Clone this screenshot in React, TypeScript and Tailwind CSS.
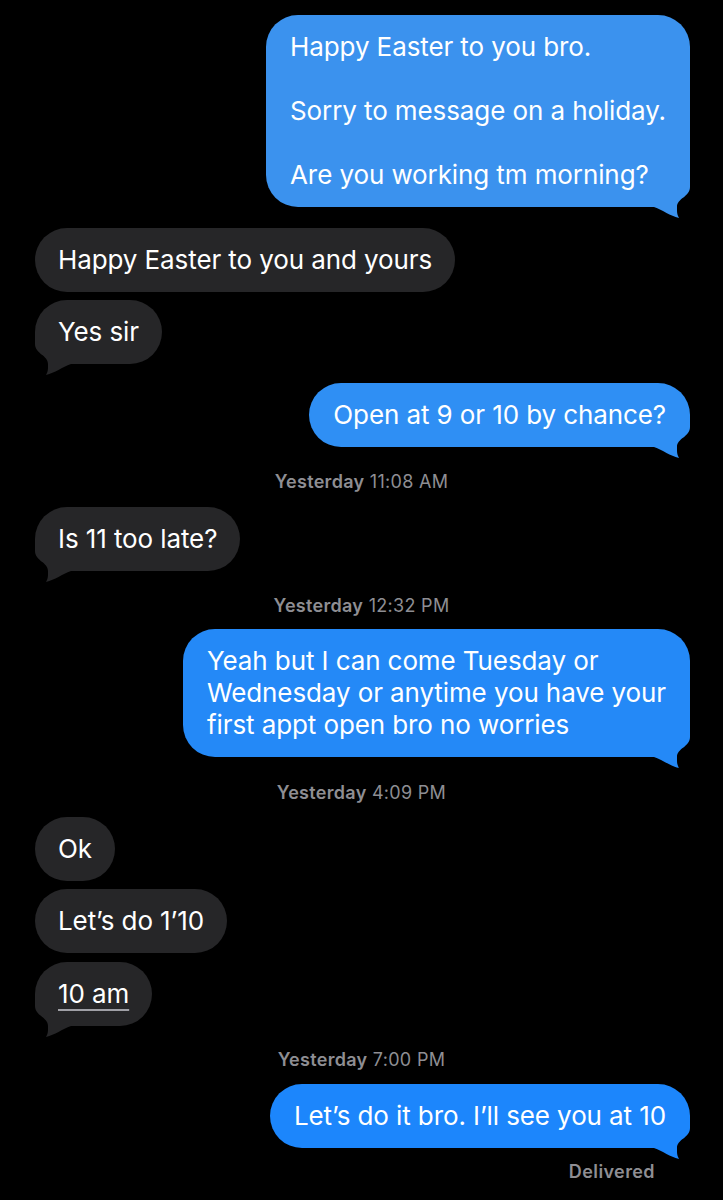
import React from "react";

const FONT = { fontFamily: '"Inter", "Liberation Sans", sans-serif' };

function TailRight({ color }: { color: string }) {
  return (
    <svg
      className="absolute right-0 bottom-[-12px] overflow-visible"
      width="36"
      height="44"
      viewBox="-36 -32 36 44"
    >
      <path
        d="M -36 -32 L 0 -32 L 0 -20 C 0 -10 -13 -9 -13 0 L -13 4 C -13 7 -12 9 -11 11 C -20 9 -27 3 -36 0 Z"
        fill={color}
      />
    </svg>
  );
}

function TailLeft({ color }: { color: string }) {
  return (
    <svg
      className="absolute left-0 bottom-[-12px] overflow-visible"
      width="36"
      height="44"
      viewBox="0 -32 36 44"
    >
      <path
        d="M 36 -32 L 0 -32 L 0 -20 C 0 -10 13 -9 13 0 L 13 4 C 13 7 12 9 11 11 C 20 9 27 3 36 0 Z"
        fill={color}
      />
    </svg>
  );
}

const GRAY = "#262628";

function Sent({
  lines,
  color,
  tail,
  className,
}: {
  lines: string[];
  color: string;
  tail?: boolean;
  className?: string;
}) {
  return (
    <div className={"flex justify-end pr-[33px] " + (className ?? "")}>
      <div
        className="relative rounded-[32px] px-[24px] py-[16px] text-white text-[26px] leading-[32px] whitespace-nowrap tracking-[-0.1px]"
        style={{ backgroundColor: color }}
      >
        {lines.map((l, i) => (
          <div key={i} className="relative z-10 h-[32px]">
            {l}
          </div>
        ))}
        {tail && <TailRight color={color} />}
      </div>
    </div>
  );
}

function Received({
  children,
  tail,
  className,
}: {
  children: React.ReactNode;
  tail?: boolean;
  className?: string;
}) {
  return (
    <div className={"flex justify-start pl-[35px] " + (className ?? "")}>
      <div className="relative rounded-[32px] bg-[#262628] px-[23px] py-[16px] text-white text-[26px] leading-[32px] whitespace-nowrap tracking-[-0.1px]">
        <div className="relative z-10 h-[32px]">{children}</div>
        {tail && <TailLeft color={GRAY} />}
      </div>
    </div>
  );
}

function Stamp({ time, className }: { time: string; className?: string }) {
  return (
    <div
      className={
        "text-center text-[18px] leading-[22px] tracking-[0.3px] text-[#8e8e93] " +
        (className ?? "")
      }
    >
      <span className="font-semibold">Yesterday</span> {time}
    </div>
  );
}

export default function App() {
  return (
    <div className="w-[723px] min-h-[1200px] bg-black overflow-hidden" style={FONT}>
      <div className="pt-[15px]">
        <Sent
          color="#3b92ee"
          tail
          lines={[
            "Happy Easter to you bro.",
            "",
            "Sorry to message on a holiday.",
            "",
            "Are you working tm morning?",
          ]}
        />
        <Received className="mt-[21px]">Happy Easter to you and yours</Received>
        <Received className="mt-[8px]" tail>
          Yes sir
        </Received>
        <Sent
          className="mt-[19px]"
          color="#2f8ff4"
          tail
          lines={["Open at 9 or 10 by chance?"]}
        />
        <Stamp time="11:08 AM" className="mt-[24px]" />
        <Received className="mt-[14px]" tail>
          Is 11 too late?
        </Received>
        <Stamp time="12:32 PM" className="mt-[24px]" />
        <Sent
          className="mt-[12px]"
          color="#2489f7"
          tail
          lines={[
            "Yeah but I can come Tuesday or",
            "Wednesday or anytime you have your",
            "first appt open bro no worries",
          ]}
        />
        <Stamp time="4:09 PM" className="mt-[25px]" />
        <Received className="mt-[13px]">Ok</Received>
        <Received className="mt-[8px]">Let’s do 1’10</Received>
        <Received className="mt-[9px]" tail>
          <span className="underline decoration-[#a0a0a6] decoration-2 underline-offset-[6px]">
            10 am
          </span>
        </Received>
        <Stamp time="7:00 PM" className="mt-[23px]" />
        <Sent
          className="mt-[13px]"
          color="#1c86fc"
          tail
          lines={["Let’s do it bro. I’ll see you at 10"]}
        />
        <div className="mt-[13px] flex justify-end pr-[68px] text-[18px] leading-[22px] tracking-[0.4px] font-semibold text-[#8e8e93]">
          Delivered
        </div>
      </div>
    </div>
  );
}
